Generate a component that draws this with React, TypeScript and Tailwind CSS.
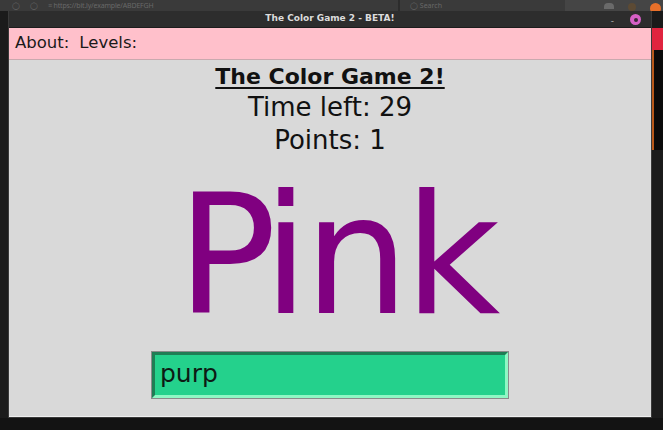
const dejavu = { fontFamily: '"DejaVu Sans", "Liberation Sans", sans-serif' };

const BrowserStrip = () => (
  <div className="flex h-[11px] w-full bg-[#3a3a3a] overflow-hidden">
    <div className="flex w-[398px] items-center gap-[10px] pl-[12px] text-[7px] leading-[11px] text-[#686868]">
      <span>◯</span>
      <span>◯</span>
      <span className="tracking-tight">≡ https://bit.ly/example/ABDEFGH</span>
    </div>
    <div className="w-[2px] bg-[#2c2c2c]" />
    <div className="flex w-[165px] items-center pl-[10px] text-[7px] leading-[11px] text-[#686868]">
      <span>◯ Search</span>
    </div>
    <div className="flex flex-1 items-start justify-end gap-[14px] bg-[#454545] pr-[2px] pt-[3px]">
      <div className="h-[6px] w-[10px] rounded-t-sm bg-[#6a6a6a]" />
      <div className="h-[8px] w-[8px] rounded-full bg-[#5c4a34]" />
      <div className="h-[11px] w-[11px] rounded-full bg-[#e8702a]" />
    </div>
  </div>
);

const TitleBar = () => (
  <div className="relative flex h-[17px] items-center justify-center border-b border-[#1c1c1c] bg-[#2d2d2d]">
    <span className="text-[9px] font-bold text-[#dcdcdc]" style={dejavu}>
      The Color Game 2 - BETA!
    </span>
    <span className="absolute right-[37px] top-[2px] text-[10px] text-[#9a9a9a]">-</span>
    <div className="absolute right-[10px] top-[3px] flex h-[11px] w-[11px] items-center justify-center rounded-full bg-[#d65fc5]">
      <div className="h-[4px] w-[4px] rounded-full bg-[#3a2a38]" />
    </div>
  </div>
);

const MenuBar = () => (
  <div className="flex h-[32px] items-center gap-[10px] border-b border-[#c9a9ae] bg-[#ffc0cb] pl-[6px] text-[16.5px] text-[#1a1a1a]" style={dejavu}>
    <span>About:</span>
    <span>Levels:</span>
  </div>
);

const GameBody = () => (
  <div className="flex flex-1 flex-col items-center bg-[#d9d9d9] text-[#111]" style={dejavu}>
    <div className="mt-[3px] text-[22px] font-bold leading-[28px] underline decoration-2 underline-offset-[3px]">
      The Color Game 2!
    </div>
    <div className="text-[26px] leading-[33px]">Time left: 29</div>
    <div className="text-[26px] leading-[33px]">Points: 1</div>
    <div className="mt-[4px] pl-[12px] text-[166px] leading-[190px] tracking-[-5px] text-[#800080]">
      <span className="mr-[-9px]">P</span>ink
    </div>
    <div className="flex h-[48px] w-[358px] border border-[#8a8a8a]">
      <div className="flex flex-1 items-center border-[3px] border-t-[#1f7d55] border-l-[#1f7d55] border-b-[#8ff7c4] border-r-[#8ff7c4] bg-[#24d18c] pl-[5px] pb-[2px] text-[25px] text-[#0d1a14]">
        purp
      </div>
    </div>
  </div>
);

const SideStrip = () => (
  <div className="flex w-[11px] flex-col">
    <div className="h-[17px] bg-[#1a1a1a]" />
    <div className="h-[22px] bg-[#e0243f]" />
    <div className="h-[100px] border-l-[2px] border-[#b8581a] bg-[#0a0a0a]" />
    <div className="flex-1 bg-[#1b1b1b]" />
  </div>
);

export default function App() {
  return (
    <div className="flex h-[430px] w-[663px] flex-col overflow-hidden bg-[#131313]">
      <BrowserStrip />
      <div className="flex h-[407px]">
        <div className="w-[8px] bg-[#1b1b1b]" />
        <div className="flex w-[644px] flex-col border-x border-b border-[#3a3a3a]">
          <TitleBar />
          <MenuBar />
          <GameBody />
          <div className="h-[1px] bg-[#efefef]" />
        </div>
        <SideStrip />
      </div>
    </div>
  );
}
